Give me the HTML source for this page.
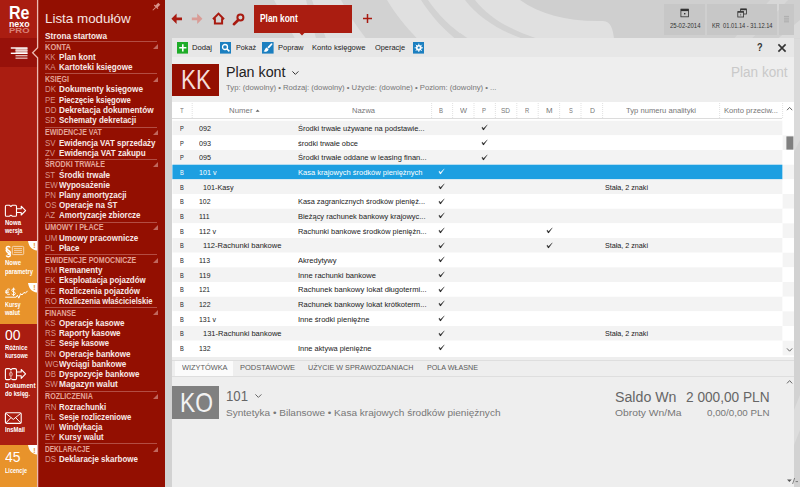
<!DOCTYPE html>
<html lang="pl"><head><meta charset="utf-8"><title>Plan kont</title>
<style>
html,body{margin:0;padding:0}
body{width:800px;height:487px;overflow:hidden;position:relative;background:#d2d2d2;font-family:"Liberation Sans",sans-serif}
.a{position:absolute;display:block}
.t{position:absolute;white-space:pre;transform-origin:0 50%}
.row{position:absolute;left:172.4px;width:621.6px;height:14.75px}
.sep{position:absolute;left:45.4px;width:112px;height:1px;background:#b34d43}
</style></head><body>
<!-- header background decoration -->
<svg class="a" style="left:166px;top:0" width="634" height="487" viewBox="166 0 634 487">
<rect x="166" y="0" width="634" height="487" fill="#d2d2d2"/>
<rect x="520" y="0" width="280" height="40" fill="#cfcfcf"/>
<path d="M274 0 L295 38.4 H614 C613 30 611 21 603 21 H598 C565 21 540 14 520 0Z" fill="#e0e0e0"/>
<g fill="#d2d2d2">
<path d="M306 0 H312 L326 38.4 H316Z"/>
<path d="M341 0 H387 C396 15 406 27 417 38.4 H366 C356 26 348 13 341 0Z"/>
<path d="M421 0 H428 C438 15 452 28 467 38.4 H455 C441 27 430 14 421 0Z"/>
<path d="M465 0 H475 C488 17 510 30 537 38.4 H522 C498 30 478 17 465 0Z"/>
<path d="M460 33 L468 38.4 H460Z"/>
</g>
<path d="M734 38.4 L770 0 H788 L752 38.4Z" fill="#d7d7d7"/><path d="M800 20 V38.4 H778Z" fill="#dadada"/>
<path d="M794 38.4 H800 V140 L794 152Z" fill="#dadada"/>
<path d="M794 410 L800 395 L800 430 L794 445Z" fill="#dcdcdc"/>
</svg>

<!-- left bar -->
<div class="a" style="left:0;top:0;width:37px;height:487px;background:#aa1d11"></div>
<div class="a" style="left:0;top:38px;width:37px;height:28.5px;background:#97110a"></div>
<div class="a" style="left:0;top:241px;width:37px;height:82.5px;background:#e8932b"></div>
<div class="a" style="left:0;top:445.4px;width:37px;height:42px;background:#e8932b"></div>
<!-- module panel -->
<div class="a" style="left:38px;top:0;width:127.3px;height:487px;background:#930f01"></div>
<!-- divider with notch -->
<svg class="a" style="left:28px;top:0" width="14" height="487" viewBox="28 0 14 487">
<path d="M37.6 0 V47.8 L32.6 52.8 L37.6 57.8 V487 H42 V0Z" fill="#930f01"/>
<path d="M37.6 0 V47.8 L32.6 52.8 L37.6 57.8 V487" fill="none" stroke="#ecbab2" stroke-width="1.3"/>
</svg>
<!-- orange corners -->
<svg class="a" style="left:28px;top:241px" width="9.2" height="9.5" viewBox="0 0 9.2 9.5"><path d="M0 0H9.2V9.5C4 9 1 6 0 0Z" fill="#fff"/></svg>
<svg class="a" style="left:28px;top:283px" width="9.2" height="9.5" viewBox="0 0 9.2 9.5"><path d="M0 0H9.2V9.5C4 9 1 6 0 0Z" fill="#fff"/></svg>
<svg class="a" style="left:28px;top:445.4px" width="9.2" height="9.5" viewBox="0 0 9.2 9.5"><path d="M0 0H9.2V9.5C4 9 1 6 0 0Z" fill="#fff"/></svg>

<!-- menu icon -->
<svg class="a" style="left:10px;top:46px" width="19" height="14" viewBox="10 46 19 14">
<rect x="15.5" y="48" width="12" height="6" fill="#d8aaa5"/>
<rect x="10.8" y="47.3" width="16.7" height="1.4" fill="#fff"/>
<rect x="15.5" y="50.1" width="12" height="0.9" fill="#efd6d3"/>
<rect x="10.8" y="52.6" width="16.7" height="1.4" fill="#fff"/>
<rect x="15.5" y="55.2" width="12" height="1.1" fill="#f3dcd9"/>
<rect x="15.5" y="57.6" width="12" height="1.1" fill="#f3dcd9"/>
</svg>
<!-- Nowa wersja icon -->
<svg class="a" style="left:4px;top:203px" width="24" height="16" viewBox="4 203 24 16" fill="none" stroke="#fff" stroke-width="1.1" stroke-linejoin="round">
<path d="M5.4 206.4 Q5.4 205.3 6.5 205.3 H9.6 L10.9 206.5 L12.2 205.3 H15.4 Q16.5 205.3 16.5 206.4 V215.2 Q16.5 216.3 15.4 216.3 H12.6 L10.9 215.3 L9.3 216.3 H6.5 Q5.4 216.3 5.4 215.2Z"/>
<path d="M16.5 208.7 H21.2 V206.2 L25.6 210.6 L21.2 215 V212.5 H16.5"/>
</svg>
<!-- paragraph icon -->
<svg class="a" style="left:4px;top:244px" width="22" height="15" viewBox="4 244 22 15" fill="none" stroke="#fff">
<path d="M10.2 247.6 C9.6 245.9 6.2 246 6.2 248.2 C6.2 250.2 10.4 250.3 10.4 252.6 C10.4 254.2 8.6 254.5 7.6 254.1 M6.3 255.6 C6.9 257.3 10.4 257.2 10.4 255 C10.4 253 6.2 252.9 6.2 250.6 C6.2 249.4 7.4 248.9 8.2 249" stroke-width="1.5"/>
<rect x="12.3" y="246.4" width="11.4" height="8.2" rx="1" stroke-width="0.9" stroke="#f7dcc0"/>
<path d="M14 248.6H22M14 250.5H22M14 252.4H22" stroke-width="0.8" stroke="#f7dcc0"/>
</svg>
<!-- kursy icon -->
<svg class="a" style="left:4px;top:286px" width="26" height="14" viewBox="4 286 26 14" fill="none" stroke="#fff" stroke-width="1">
<path d="M10 289.6 C8.4 288.2 6.2 289.4 6.2 291.8 C6.2 294.2 8.4 295.4 10 294 M5.2 291 H8.8 M5.2 292.7 H8.8"/>
<path d="M15.2 289.6 C14 288.4 11.8 288.8 11.8 290.3 C11.8 292.2 15.4 291.6 15.4 293.5 C15.4 295 12.8 295.3 11.6 294 M13.6 287.6 V296"/>
<path d="M5.2 297.2 H16.2 L17.4 295.2 L18.8 298.2 L20.6 293.6 L22 295 L24 292.4 L25.4 293.2 L27.6 290.8" stroke-width="1"/>
</svg>
<!-- dokument icon -->
<svg class="a" style="left:4px;top:366px" width="24" height="16" viewBox="4 366 24 16" fill="none" stroke="#fff" stroke-width="1.1" stroke-linejoin="round">
<path d="M5.4 370 Q5.4 368.6 6.8 368.6 H9.4 L10.9 369.8 L12.4 368.6 H15 Q16.5 368.6 16.5 370 V378.4 Q16.5 379.6 15.4 379.6 H12.6 L10.9 378.6 L9.3 379.6 H6.5 Q5.4 379.6 5.4 378.4Z"/>
<path d="M10.9 370.4 V378" stroke="#e9b9b3" stroke-width="0.9"/>
<ellipse cx="10.9" cy="374.2" rx="1.5" ry="2" stroke="#e9b9b3" stroke-width="0.8"/>
<path d="M16.5 372 H21.2 V369.5 L25.6 373.9 L21.2 378.3 V375.8 H16.5"/>
</svg>
<!-- envelope -->
<svg class="a" style="left:4px;top:411px" width="19" height="14" viewBox="4 411 19 14" fill="none" stroke="#fff" stroke-width="1.1" stroke-linejoin="round">
<rect x="5.4" y="412.8" width="15.8" height="10.6" rx="1.2"/>
<path d="M5.8 413.3 L13.3 419.4 L20.8 413.3 M5.8 423 L11 417.6 M20.8 423 L15.6 417.6" stroke-width="1"/>
</svg>
<!-- pin -->
<svg class="a" style="left:151px;top:2px" width="10" height="10" viewBox="0 0 10 10"><g transform="rotate(45 5 5)" fill="#d9958b"><rect x="3.6" y="0.4" width="2.8" height="4.2"/><rect x="2.4" y="4.2" width="5.2" height="1.2"/><rect x="4.6" y="5.4" width="0.9" height="4.2"/></g></svg>
<div class="sep" style="top:40.90px"></div>
<div class="sep" style="top:73.30px"></div>
<div class="sep" style="top:126.50px"></div>
<div class="sep" style="top:158.60px"></div>
<div class="sep" style="top:221.60px"></div>
<div class="sep" style="top:254.10px"></div>
<div class="sep" style="top:306.90px"></div>
<div class="sep" style="top:390.50px"></div>
<div class="sep" style="top:443.30px"></div>
<div class="sep" style="top:40.7px"></div>
<svg class="a" style="left:152.8px;top:44.30px" width="5" height="5" viewBox="0 0 5 5"><path d="M5 0V5H0Z" fill="#c0675d"/></svg>
<svg class="a" style="left:152.8px;top:76.70px" width="5" height="5" viewBox="0 0 5 5"><path d="M5 0V5H0Z" fill="#c0675d"/></svg>
<svg class="a" style="left:152.8px;top:129.90px" width="5" height="5" viewBox="0 0 5 5"><path d="M5 0V5H0Z" fill="#c0675d"/></svg>
<svg class="a" style="left:152.8px;top:162.00px" width="5" height="5" viewBox="0 0 5 5"><path d="M5 0V5H0Z" fill="#c0675d"/></svg>
<svg class="a" style="left:152.8px;top:225.00px" width="5" height="5" viewBox="0 0 5 5"><path d="M5 0V5H0Z" fill="#c0675d"/></svg>
<svg class="a" style="left:152.8px;top:257.50px" width="5" height="5" viewBox="0 0 5 5"><path d="M5 0V5H0Z" fill="#c0675d"/></svg>
<svg class="a" style="left:152.8px;top:310.30px" width="5" height="5" viewBox="0 0 5 5"><path d="M5 0V5H0Z" fill="#c0675d"/></svg>
<svg class="a" style="left:152.8px;top:393.90px" width="5" height="5" viewBox="0 0 5 5"><path d="M5 0V5H0Z" fill="#c0675d"/></svg>
<svg class="a" style="left:152.8px;top:446.70px" width="5" height="5" viewBox="0 0 5 5"><path d="M5 0V5H0Z" fill="#c0675d"/></svg>

<!-- nav icons -->
<svg class="a" style="left:170px;top:10px" width="80" height="18" viewBox="170 10 80 18">
<path d="M171.4 18.8 L176.6 13.6 V17.4 H182 V20.2 H176.6 V24Z" fill="#a81a10"/>
<path d="M202.4 18.8 L197.2 13.6 V17.4 H191.8 V20.2 H197.2 V24Z" fill="#d99c96"/>
<path d="M213 19.2 L218.5 13.6 L224 19.2 M214.9 18.2 V23.4 H222.1 V18.2" fill="none" stroke="#a81a10" stroke-width="2"/>
<circle cx="240.4" cy="17.6" r="3" fill="none" stroke="#a81a10" stroke-width="2"/>
<path d="M238.2 20 L233.9 24.2" stroke="#a81a10" stroke-width="2.6" stroke-linecap="round"/>
</svg>
<!-- tab -->
<div class="a" style="left:253.5px;top:5.2px;width:98.6px;height:27.4px;background:#aa1d11"></div>
<svg class="a" style="left:298px;top:32.4px" width="8" height="4" viewBox="0 0 8 4"><path d="M0.6 0H7.4L4 3.6Z" fill="#aa1d11"/></svg>
<svg class="a" style="left:362px;top:13px" width="11" height="11" viewBox="0 0 11 11"><path d="M5.5 1V10M1 5.5H10" stroke="#a81a10" stroke-width="1.5"/></svg>

<!-- top right boxes -->
<div class="a" style="left:664.4px;top:3.6px;width:40.8px;height:31px;background:#c7c7c7"></div>
<div class="a" style="left:707px;top:3.6px;width:69.5px;height:31px;background:#c7c7c7"></div>
<div class="a" style="left:778.6px;top:3.6px;width:15.4px;height:31px;background:#c7c7c7"></div>
<svg class="a" style="left:680px;top:8px" width="10" height="10" viewBox="0 0 10 10"><rect x="0.9" y="1.2" width="7.6" height="7.6" fill="none" stroke="#333" stroke-width="0.8"/><rect x="0.9" y="0.9" width="7.6" height="2.2" fill="#333"/><rect x="4" y="5" width="1.4" height="1.4" fill="#333"/></svg>
<svg class="a" style="left:737px;top:8px" width="11" height="10" viewBox="0 0 11 10"><rect x="3.6" y="1" width="5.8" height="5" fill="none" stroke="#333" stroke-width="0.8"/><rect x="3.6" y="0.7" width="5.8" height="1.5" fill="#333"/><rect x="0.8" y="3.6" width="5.8" height="5.4" fill="#c7c7c7" stroke="#333" stroke-width="0.8"/><rect x="0.8" y="3.4" width="5.8" height="1.3" fill="#333"/><rect x="3.3" y="5.8" width="0.8" height="1.8" fill="#666"/></svg>
<svg class="a" style="left:783px;top:14px" width="7" height="9" viewBox="0 0 7 9"><path d="M1 2.4H6M1 4.2H6M1 6H6M1 7.8H6" stroke="#a2a2a2" stroke-width="0.7"/></svg>

<!-- toolbar -->
<div class="a" style="left:172.4px;top:38.4px;width:621.6px;height:19px;background:#e7e7e7"></div>
<!-- content area -->
<div class="a" style="left:172.4px;top:57.4px;width:621.6px;height:429.6px;background:#eeeeee"></div>
<!-- toolbar icons -->
<svg class="a" style="left:176.6px;top:42px" width="11.6" height="11.6" viewBox="0 0 11.6 11.6"><rect width="11.6" height="11.6" fill="#1eac28"/><path d="M5.8 2.2V9.4M2.2 5.8H9.4" stroke="#fff" stroke-width="1.6"/></svg>
<svg class="a" style="left:219.8px;top:42px" width="11.6" height="11.6" viewBox="0 0 11.6 11.6"><rect width="11.6" height="11.6" fill="#1b7fc0"/><circle cx="5" cy="5" r="2.5" fill="none" stroke="#fff" stroke-width="1.3"/><path d="M6.9 6.9L9.4 9.4" stroke="#fff" stroke-width="1.5"/></svg>
<svg class="a" style="left:262.4px;top:42px" width="11.6" height="11.6" viewBox="0 0 11.6 11.6"><rect width="11.6" height="11.6" fill="#1b7fc0"/><path d="M10.2 1.2 L9 1.4 L5.4 5.2 L6.8 6.6 L10.4 2.6Z M4.8 5.6 L6.6 7.4 C6 9.4 3.8 10 1.6 9.6 C3 8.6 2.8 6.4 4.8 5.6Z" fill="#fff"/></svg>
<svg class="a" style="left:412.8px;top:42px" width="11.6" height="11.6" viewBox="0 0 11.6 11.6"><rect width="11.6" height="11.6" fill="#1b7fc0"/><circle cx="5.8" cy="5.8" r="2.2" fill="none" stroke="#fff" stroke-width="1.4"/><path d="M5.8 1.6V10M1.6 5.8H10M2.8 2.8L8.8 8.8M8.8 2.8L2.8 8.8" stroke="#fff" stroke-width="0.9"/><circle cx="5.8" cy="5.8" r="1" fill="#1b7fc0"/></svg>
<svg class="a" style="left:777px;top:43px" width="10" height="10" viewBox="0 0 10 10"><path d="M1.4 1.4L8.6 8.6M8.6 1.4L1.4 8.6" stroke="#333" stroke-width="1.6"/></svg>

<!-- KK box -->
<div class="a" style="left:172.4px;top:64px;width:46.6px;height:32.4px;background:#930f01"></div>
<svg class="a" style="left:291px;top:69px" width="9" height="8" viewBox="0 0 9 8"><path d="M1.4 2.4L4.4 5.4L7.4 2.4" fill="none" stroke="#333" stroke-width="1"/></svg>

<!-- table -->
<div class="a" style="left:172.4px;top:102.4px;width:621.6px;height:254.2px;background:#fff"></div>
<div class="a" style="left:172.4px;top:118.2px;width:610px;height:1px;background:#dcdcdc"></div>
<svg class="a" style="left:172px;top:119px" width="622" height="238" viewBox="172 119 622 238"><rect x="172.4" y="120.70" width="610.2" height="14.667" fill="#f3f3f3"/><rect x="172.4" y="135.37" width="610.2" height="14.667" fill="#ffffff"/><rect x="172.4" y="150.03" width="610.2" height="14.667" fill="#f3f3f3"/><rect x="172.4" y="164.70" width="610.2" height="14.667" fill="#1d9fe1"/><rect x="172.4" y="179.37" width="610.2" height="14.667" fill="#f3f3f3"/><rect x="172.4" y="194.03" width="610.2" height="14.667" fill="#ffffff"/><rect x="172.4" y="208.70" width="610.2" height="14.667" fill="#f3f3f3"/><rect x="172.4" y="223.37" width="610.2" height="14.667" fill="#ffffff"/><rect x="172.4" y="238.04" width="610.2" height="14.667" fill="#f3f3f3"/><rect x="172.4" y="252.70" width="610.2" height="14.667" fill="#ffffff"/><rect x="172.4" y="267.37" width="610.2" height="14.667" fill="#f3f3f3"/><rect x="172.4" y="282.04" width="610.2" height="14.667" fill="#ffffff"/><rect x="172.4" y="296.70" width="610.2" height="14.667" fill="#f3f3f3"/><rect x="172.4" y="311.37" width="610.2" height="14.667" fill="#ffffff"/><rect x="172.4" y="326.04" width="610.2" height="14.667" fill="#f3f3f3"/><rect x="172.4" y="340.70" width="610.2" height="14.667" fill="#ffffff"/><rect x="782.6" y="120.70" width="11.4" height="14.667" fill="#ffffff"/><rect x="782.6" y="135.37" width="11.4" height="14.667" fill="#f4f4f4"/><rect x="782.6" y="150.03" width="11.4" height="14.667" fill="#ffffff"/><rect x="782.6" y="164.70" width="11.4" height="14.667" fill="#f4f4f4"/><rect x="782.6" y="179.37" width="11.4" height="14.667" fill="#ffffff"/><rect x="782.6" y="194.03" width="11.4" height="14.667" fill="#f4f4f4"/><rect x="782.6" y="208.70" width="11.4" height="14.667" fill="#ffffff"/><rect x="782.6" y="223.37" width="11.4" height="14.667" fill="#f4f4f4"/><rect x="782.6" y="238.04" width="11.4" height="14.667" fill="#ffffff"/><rect x="782.6" y="252.70" width="11.4" height="14.667" fill="#f4f4f4"/><rect x="782.6" y="267.37" width="11.4" height="14.667" fill="#ffffff"/><rect x="782.6" y="282.04" width="11.4" height="14.667" fill="#f4f4f4"/><rect x="782.6" y="296.70" width="11.4" height="14.667" fill="#ffffff"/><rect x="782.6" y="311.37" width="11.4" height="14.667" fill="#f4f4f4"/><rect x="782.6" y="326.04" width="11.4" height="14.667" fill="#ffffff"/><rect x="782.6" y="340.70" width="11.4" height="14.667" fill="#f4f4f4"/></svg>

<!-- column separators -->
<svg class="a" style="left:172px;top:103px" width="622" height="15" viewBox="172 103 622 15"><path d="M192.2 103V118M431.6 103V118M452.6 103V118M474 103V118M495.4 103V118M516.8 103V118M538.2 103V118M559.6 103V118M581 103V118M602.6 103V118M719.6 103V118M782.6 103V118" stroke="#d9d9d9" stroke-width="0.8" stroke-dasharray="1 1"/>
<path d="M255.6 111.8H259.6L257.6 109.4Z" fill="#666"/></svg>
<!-- scrollbar -->
<svg class="a" style="left:784px;top:104px" width="10" height="252" viewBox="784 104 10 252"><path d="M787 110.2L789.6 107.4L792.2 110.2" fill="none" stroke="#555" stroke-width="0.9"/><rect x="786.4" y="136.4" width="7" height="13.2" fill="#7f7f7f"/><path d="M787 348.4L789.6 351.2L792.2 348.4" fill="none" stroke="#555" stroke-width="0.9"/></svg>
<svg class="a" style="left:480.80px;top:124.43px" width="7" height="7" viewBox="0 0 7 7"><path d="M0.8 3.6 L2.1 5.9 L2.7 5.9 L6.3 0.8 L2.5 4.6 L1.6 3.2Z" fill="#222" stroke="#222" stroke-width="0.3"/></svg>
<svg class="a" style="left:480.80px;top:139.10px" width="7" height="7" viewBox="0 0 7 7"><path d="M0.8 3.6 L2.1 5.9 L2.7 5.9 L6.3 0.8 L2.5 4.6 L1.6 3.2Z" fill="#222" stroke="#222" stroke-width="0.3"/></svg>
<svg class="a" style="left:480.80px;top:153.77px" width="7" height="7" viewBox="0 0 7 7"><path d="M0.8 3.6 L2.1 5.9 L2.7 5.9 L6.3 0.8 L2.5 4.6 L1.6 3.2Z" fill="#222" stroke="#222" stroke-width="0.3"/></svg>
<svg class="a" style="left:437.80px;top:168.43px" width="7" height="7" viewBox="0 0 7 7"><path d="M0.8 3.6 L2.1 5.9 L2.7 5.9 L6.3 0.8 L2.5 4.6 L1.6 3.2Z" fill="#fff" stroke="#fff" stroke-width="0.3"/></svg>
<svg class="a" style="left:437.80px;top:183.10px" width="7" height="7" viewBox="0 0 7 7"><path d="M0.8 3.6 L2.1 5.9 L2.7 5.9 L6.3 0.8 L2.5 4.6 L1.6 3.2Z" fill="#222" stroke="#222" stroke-width="0.3"/></svg>
<svg class="a" style="left:437.80px;top:197.77px" width="7" height="7" viewBox="0 0 7 7"><path d="M0.8 3.6 L2.1 5.9 L2.7 5.9 L6.3 0.8 L2.5 4.6 L1.6 3.2Z" fill="#222" stroke="#222" stroke-width="0.3"/></svg>
<svg class="a" style="left:437.80px;top:212.44px" width="7" height="7" viewBox="0 0 7 7"><path d="M0.8 3.6 L2.1 5.9 L2.7 5.9 L6.3 0.8 L2.5 4.6 L1.6 3.2Z" fill="#222" stroke="#222" stroke-width="0.3"/></svg>
<svg class="a" style="left:437.80px;top:227.10px" width="7" height="7" viewBox="0 0 7 7"><path d="M0.8 3.6 L2.1 5.9 L2.7 5.9 L6.3 0.8 L2.5 4.6 L1.6 3.2Z" fill="#222" stroke="#222" stroke-width="0.3"/></svg>
<svg class="a" style="left:545.80px;top:227.10px" width="7" height="7" viewBox="0 0 7 7"><path d="M0.8 3.6 L2.1 5.9 L2.7 5.9 L6.3 0.8 L2.5 4.6 L1.6 3.2Z" fill="#222" stroke="#222" stroke-width="0.3"/></svg>
<svg class="a" style="left:437.80px;top:241.77px" width="7" height="7" viewBox="0 0 7 7"><path d="M0.8 3.6 L2.1 5.9 L2.7 5.9 L6.3 0.8 L2.5 4.6 L1.6 3.2Z" fill="#222" stroke="#222" stroke-width="0.3"/></svg>
<svg class="a" style="left:545.80px;top:241.77px" width="7" height="7" viewBox="0 0 7 7"><path d="M0.8 3.6 L2.1 5.9 L2.7 5.9 L6.3 0.8 L2.5 4.6 L1.6 3.2Z" fill="#222" stroke="#222" stroke-width="0.3"/></svg>
<svg class="a" style="left:437.80px;top:256.44px" width="7" height="7" viewBox="0 0 7 7"><path d="M0.8 3.6 L2.1 5.9 L2.7 5.9 L6.3 0.8 L2.5 4.6 L1.6 3.2Z" fill="#222" stroke="#222" stroke-width="0.3"/></svg>
<svg class="a" style="left:437.80px;top:271.10px" width="7" height="7" viewBox="0 0 7 7"><path d="M0.8 3.6 L2.1 5.9 L2.7 5.9 L6.3 0.8 L2.5 4.6 L1.6 3.2Z" fill="#222" stroke="#222" stroke-width="0.3"/></svg>
<svg class="a" style="left:437.80px;top:285.77px" width="7" height="7" viewBox="0 0 7 7"><path d="M0.8 3.6 L2.1 5.9 L2.7 5.9 L6.3 0.8 L2.5 4.6 L1.6 3.2Z" fill="#222" stroke="#222" stroke-width="0.3"/></svg>
<svg class="a" style="left:437.80px;top:300.44px" width="7" height="7" viewBox="0 0 7 7"><path d="M0.8 3.6 L2.1 5.9 L2.7 5.9 L6.3 0.8 L2.5 4.6 L1.6 3.2Z" fill="#222" stroke="#222" stroke-width="0.3"/></svg>
<svg class="a" style="left:437.80px;top:315.10px" width="7" height="7" viewBox="0 0 7 7"><path d="M0.8 3.6 L2.1 5.9 L2.7 5.9 L6.3 0.8 L2.5 4.6 L1.6 3.2Z" fill="#222" stroke="#222" stroke-width="0.3"/></svg>
<svg class="a" style="left:437.80px;top:329.77px" width="7" height="7" viewBox="0 0 7 7"><path d="M0.8 3.6 L2.1 5.9 L2.7 5.9 L6.3 0.8 L2.5 4.6 L1.6 3.2Z" fill="#222" stroke="#222" stroke-width="0.3"/></svg>
<svg class="a" style="left:437.80px;top:344.44px" width="7" height="7" viewBox="0 0 7 7"><path d="M0.8 3.6 L2.1 5.9 L2.7 5.9 L6.3 0.8 L2.5 4.6 L1.6 3.2Z" fill="#222" stroke="#222" stroke-width="0.3"/></svg>

<!-- tab strip -->
<div class="a" style="left:172.4px;top:360px;width:621.6px;height:1px;background:#dedede"></div>
<div class="a" style="left:172.4px;top:375.8px;width:621.6px;height:1px;background:#dedede"></div>
<div class="a" style="left:174.8px;top:360.6px;width:58.6px;height:15.8px;background:#fbfbfb"></div>
<!-- KO box -->
<div class="a" style="left:172.4px;top:386px;width:46.6px;height:33px;background:#808080"></div>
<svg class="a" style="left:253.8px;top:391.8px" width="9" height="8" viewBox="0 0 9 8"><path d="M1.4 2.4L4.4 5.4L7.4 2.4" fill="none" stroke="#666" stroke-width="1"/></svg>
<svg class="a" style="left:784px;top:378px" width="16" height="109" viewBox="784 378 16 109"><path d="M787 383.4L789.6 380.6L792.2 383.4" fill="none" stroke="#555" stroke-width="0.9"/><path d="M787 479.4L789.4 482L791.8 479.4Z" fill="#555"/><path d="M794.6 478L792.6 484M795.6 481.6H798" stroke="#555" stroke-width="0.7"/></svg>

<span class="t" style="left:9.00px;top:2.00px;font-size:19px;line-height:22.8px;color:#fff;font-weight:700;transform:scaleX(0.8437);">Re</span>
<span class="t" style="left:9.00px;top:19.30px;font-size:8.5px;line-height:10.2px;color:#fff;font-weight:700;transform:scaleX(1.0331);">nexo</span>
<span class="t" style="left:9.00px;top:26.84px;font-size:6.6px;line-height:7.92px;color:#d98378;font-weight:700;transform:scaleX(1.4339);">PRO</span>
<span class="t" style="left:5.00px;top:218.88px;font-size:7.2px;line-height:8.64px;color:#fff;font-weight:700;transform:scaleX(0.8346);">Nowa</span>
<span class="t" style="left:5.00px;top:226.88px;font-size:7.2px;line-height:8.64px;color:#fff;font-weight:700;transform:scaleX(0.7816);">wersja</span>
<span class="t" style="left:5.00px;top:258.98px;font-size:7.2px;line-height:8.64px;color:#fff;font-weight:700;transform:scaleX(0.8346);">Nowe</span>
<span class="t" style="left:5.00px;top:268.08px;font-size:7.2px;line-height:8.64px;color:#fff;font-weight:700;transform:scaleX(0.8054);">parametry</span>
<span class="t" style="left:5.00px;top:301.28px;font-size:7.2px;line-height:8.64px;color:#fff;font-weight:700;transform:scaleX(0.7607);">Kursy</span>
<span class="t" style="left:5.00px;top:308.98px;font-size:7.2px;line-height:8.64px;color:#fff;font-weight:700;transform:scaleX(0.8163);">walut</span>
<span class="t" style="left:5.00px;top:325.90px;font-size:15.5px;line-height:18.6px;color:#fff;transform:scaleX(0.8986);">00</span>
<span class="t" style="left:5.00px;top:344.28px;font-size:7.2px;line-height:8.64px;color:#fff;font-weight:700;transform:scaleX(0.8163);">Różnice</span>
<span class="t" style="left:5.00px;top:352.28px;font-size:7.2px;line-height:8.64px;color:#fff;font-weight:700;transform:scaleX(0.7884);">kursowe</span>
<span class="t" style="left:5.00px;top:382.18px;font-size:7.2px;line-height:8.64px;color:#fff;font-weight:700;transform:scaleX(0.8676);">Dokument</span>
<span class="t" style="left:5.00px;top:389.88px;font-size:7.2px;line-height:8.64px;color:#fff;font-weight:700;transform:scaleX(0.8024);">do księg.</span>
<span class="t" style="left:5.00px;top:425.68px;font-size:7.2px;line-height:8.64px;color:#fff;font-weight:700;transform:scaleX(0.8205);">InsMail</span>
<span class="t" style="left:5.00px;top:449.24px;font-size:14.6px;line-height:17.52px;color:#fff;transform:scaleX(0.9548);">45</span>
<span class="t" style="left:5.00px;top:466.88px;font-size:7.2px;line-height:8.64px;color:#fff;font-weight:700;transform:scaleX(0.7648);">Licencje</span>
<span class="t" style="left:33.20px;top:242.40px;font-size:7px;line-height:8.4px;color:#e8932b;font-weight:700;">!</span>
<span class="t" style="left:33.20px;top:284.40px;font-size:7px;line-height:8.4px;color:#e8932b;font-weight:700;">!</span>
<span class="t" style="left:33.20px;top:446.80px;font-size:7px;line-height:8.4px;color:#e8932b;font-weight:700;">!</span>
<span class="t" style="left:45.40px;top:11.20px;font-size:13.5px;line-height:16.2px;color:#f6e4e1;transform:scaleX(0.9919);">Lista modułów</span>
<span class="t" style="left:45.40px;top:30.72px;font-size:9.3px;line-height:11.16px;color:#f8eae8;font-weight:700;transform:scaleX(0.8824);">Strona startowa</span>
<span class="t" style="left:45.40px;top:41.68px;font-size:9.2px;line-height:11.04px;color:#e3a599;font-weight:700;transform:scaleX(0.8129);">KONTA</span>
<span class="t" style="left:45.40px;top:51.99px;font-size:9.3px;line-height:11.16px;color:#d9958b;transform:scaleX(0.8500);">KK</span>
<span class="t" style="left:59.40px;top:51.99px;font-size:9.3px;line-height:11.16px;color:#f8eae8;font-weight:700;transform:scaleX(0.8747);">Plan kont</span>
<span class="t" style="left:45.40px;top:62.16px;font-size:9.3px;line-height:11.16px;color:#d9958b;transform:scaleX(0.8500);">KA</span>
<span class="t" style="left:59.40px;top:62.16px;font-size:9.3px;line-height:11.16px;color:#f8eae8;font-weight:700;transform:scaleX(0.8662);">Kartoteki księgowe</span>
<span class="t" style="left:45.40px;top:74.08px;font-size:9.2px;line-height:11.04px;color:#e3a599;font-weight:700;transform:scaleX(0.7703);">KSIĘGI</span>
<span class="t" style="left:45.40px;top:84.39px;font-size:9.3px;line-height:11.16px;color:#d9958b;transform:scaleX(0.8500);">DK</span>
<span class="t" style="left:59.40px;top:84.39px;font-size:9.3px;line-height:11.16px;color:#f8eae8;font-weight:700;transform:scaleX(0.8836);">Dokumenty księgowe</span>
<span class="t" style="left:45.40px;top:94.56px;font-size:9.3px;line-height:11.16px;color:#d9958b;transform:scaleX(0.8500);">PE</span>
<span class="t" style="left:59.40px;top:94.56px;font-size:9.3px;line-height:11.16px;color:#f8eae8;font-weight:700;transform:scaleX(0.8330);">Pieczęcie księgowe</span>
<span class="t" style="left:45.40px;top:104.73px;font-size:9.3px;line-height:11.16px;color:#d9958b;transform:scaleX(0.8500);">DD</span>
<span class="t" style="left:59.40px;top:104.73px;font-size:9.3px;line-height:11.16px;color:#f8eae8;font-weight:700;transform:scaleX(0.8854);">Dekretacja dokumentów</span>
<span class="t" style="left:45.40px;top:114.90px;font-size:9.3px;line-height:11.16px;color:#d9958b;transform:scaleX(0.8500);">SD</span>
<span class="t" style="left:59.40px;top:114.90px;font-size:9.3px;line-height:11.16px;color:#f8eae8;font-weight:700;transform:scaleX(0.8585);">Schematy dekretacji</span>
<span class="t" style="left:45.40px;top:127.28px;font-size:9.2px;line-height:11.04px;color:#e3a599;font-weight:700;transform:scaleX(0.7670);">EWIDENCJE VAT</span>
<span class="t" style="left:45.40px;top:137.59px;font-size:9.3px;line-height:11.16px;color:#d9958b;transform:scaleX(0.8500);">SV</span>
<span class="t" style="left:59.40px;top:137.59px;font-size:9.3px;line-height:11.16px;color:#f8eae8;font-weight:700;transform:scaleX(0.8554);">Ewidencja VAT sprzedaży</span>
<span class="t" style="left:45.40px;top:147.76px;font-size:9.3px;line-height:11.16px;color:#d9958b;transform:scaleX(0.8500);">ZV</span>
<span class="t" style="left:59.40px;top:147.76px;font-size:9.3px;line-height:11.16px;color:#f8eae8;font-weight:700;transform:scaleX(0.8681);">Ewidencja VAT zakupu</span>
<span class="t" style="left:45.40px;top:159.38px;font-size:9.2px;line-height:11.04px;color:#e3a599;font-weight:700;transform:scaleX(0.7789);">ŚRODKI TRWAŁE</span>
<span class="t" style="left:45.40px;top:169.69px;font-size:9.3px;line-height:11.16px;color:#d9958b;transform:scaleX(0.8500);">ST</span>
<span class="t" style="left:59.40px;top:169.69px;font-size:9.3px;line-height:11.16px;color:#f8eae8;font-weight:700;transform:scaleX(0.8717);">Środki trwałe</span>
<span class="t" style="left:45.40px;top:179.86px;font-size:9.3px;line-height:11.16px;color:#d9958b;transform:scaleX(0.8500);">EW</span>
<span class="t" style="left:59.40px;top:179.86px;font-size:9.3px;line-height:11.16px;color:#f8eae8;font-weight:700;transform:scaleX(0.8666);">Wyposażenie</span>
<span class="t" style="left:45.40px;top:190.03px;font-size:9.3px;line-height:11.16px;color:#d9958b;transform:scaleX(0.8500);">PN</span>
<span class="t" style="left:59.40px;top:190.03px;font-size:9.3px;line-height:11.16px;color:#f8eae8;font-weight:700;transform:scaleX(0.8606);">Plany amortyzacji</span>
<span class="t" style="left:45.40px;top:200.20px;font-size:9.3px;line-height:11.16px;color:#d9958b;transform:scaleX(0.8500);">OS</span>
<span class="t" style="left:59.40px;top:200.20px;font-size:9.3px;line-height:11.16px;color:#f8eae8;font-weight:700;transform:scaleX(0.8626);">Operacje na ŚT</span>
<span class="t" style="left:45.40px;top:210.37px;font-size:9.3px;line-height:11.16px;color:#d9958b;transform:scaleX(0.8500);">AZ</span>
<span class="t" style="left:59.40px;top:210.37px;font-size:9.3px;line-height:11.16px;color:#f8eae8;font-weight:700;transform:scaleX(0.8572);">Amortyzacje zbiorcze</span>
<span class="t" style="left:45.40px;top:222.38px;font-size:9.2px;line-height:11.04px;color:#e3a599;font-weight:700;transform:scaleX(0.7826);">UMOWY I PŁACE</span>
<span class="t" style="left:45.40px;top:232.69px;font-size:9.3px;line-height:11.16px;color:#d9958b;transform:scaleX(0.8500);">UM</span>
<span class="t" style="left:59.40px;top:232.69px;font-size:9.3px;line-height:11.16px;color:#f8eae8;font-weight:700;transform:scaleX(0.8660);">Umowy pracownicze</span>
<span class="t" style="left:45.40px;top:242.86px;font-size:9.3px;line-height:11.16px;color:#d9958b;transform:scaleX(0.8500);">PL</span>
<span class="t" style="left:59.40px;top:242.86px;font-size:9.3px;line-height:11.16px;color:#f8eae8;font-weight:700;transform:scaleX(0.8355);">Płace</span>
<span class="t" style="left:45.40px;top:254.88px;font-size:9.2px;line-height:11.04px;color:#e3a599;font-weight:700;transform:scaleX(0.7635);">EWIDENCJE POMOCNICZE</span>
<span class="t" style="left:45.40px;top:265.19px;font-size:9.3px;line-height:11.16px;color:#d9958b;transform:scaleX(0.8500);">RM</span>
<span class="t" style="left:59.40px;top:265.19px;font-size:9.3px;line-height:11.16px;color:#f8eae8;font-weight:700;transform:scaleX(0.8658);">Remanenty</span>
<span class="t" style="left:45.40px;top:275.36px;font-size:9.3px;line-height:11.16px;color:#d9958b;transform:scaleX(0.8500);">EK</span>
<span class="t" style="left:59.40px;top:275.36px;font-size:9.3px;line-height:11.16px;color:#f8eae8;font-weight:700;transform:scaleX(0.8518);">Eksploatacja pojazdów</span>
<span class="t" style="left:45.40px;top:285.53px;font-size:9.3px;line-height:11.16px;color:#d9958b;transform:scaleX(0.8500);">KE</span>
<span class="t" style="left:59.40px;top:285.53px;font-size:9.3px;line-height:11.16px;color:#f8eae8;font-weight:700;transform:scaleX(0.8476);">Rozliczenia pojazdów</span>
<span class="t" style="left:45.40px;top:295.70px;font-size:9.3px;line-height:11.16px;color:#d9958b;transform:scaleX(0.8500);">RO</span>
<span class="t" style="left:59.40px;top:295.70px;font-size:9.3px;line-height:11.16px;color:#f8eae8;font-weight:700;transform:scaleX(0.8149);">Rozliczenia właścicielskie</span>
<span class="t" style="left:45.40px;top:307.68px;font-size:9.2px;line-height:11.04px;color:#e3a599;font-weight:700;transform:scaleX(0.7687);">FINANSE</span>
<span class="t" style="left:45.40px;top:317.99px;font-size:9.3px;line-height:11.16px;color:#d9958b;transform:scaleX(0.8500);">KS</span>
<span class="t" style="left:59.40px;top:317.99px;font-size:9.3px;line-height:11.16px;color:#f8eae8;font-weight:700;transform:scaleX(0.8609);">Operacje kasowe</span>
<span class="t" style="left:45.40px;top:328.16px;font-size:9.3px;line-height:11.16px;color:#d9958b;transform:scaleX(0.8500);">RS</span>
<span class="t" style="left:59.40px;top:328.16px;font-size:9.3px;line-height:11.16px;color:#f8eae8;font-weight:700;transform:scaleX(0.8638);">Raporty kasowe</span>
<span class="t" style="left:45.40px;top:338.33px;font-size:9.3px;line-height:11.16px;color:#d9958b;transform:scaleX(0.8500);">SE</span>
<span class="t" style="left:59.40px;top:338.33px;font-size:9.3px;line-height:11.16px;color:#f8eae8;font-weight:700;transform:scaleX(0.8283);">Sesje kasowe</span>
<span class="t" style="left:45.40px;top:348.50px;font-size:9.3px;line-height:11.16px;color:#d9958b;transform:scaleX(0.8500);">BN</span>
<span class="t" style="left:59.40px;top:348.50px;font-size:9.3px;line-height:11.16px;color:#f8eae8;font-weight:700;transform:scaleX(0.8715);">Operacje bankowe</span>
<span class="t" style="left:45.40px;top:358.67px;font-size:9.3px;line-height:11.16px;color:#d9958b;transform:scaleX(0.8500);">WG</span>
<span class="t" style="left:59.40px;top:358.67px;font-size:9.3px;line-height:11.16px;color:#f8eae8;font-weight:700;transform:scaleX(0.8690);">Wyciągi bankowe</span>
<span class="t" style="left:45.40px;top:368.84px;font-size:9.3px;line-height:11.16px;color:#d9958b;transform:scaleX(0.8500);">DB</span>
<span class="t" style="left:59.40px;top:368.84px;font-size:9.3px;line-height:11.16px;color:#f8eae8;font-weight:700;transform:scaleX(0.8596);">Dyspozycje bankowe</span>
<span class="t" style="left:45.40px;top:379.01px;font-size:9.3px;line-height:11.16px;color:#d9958b;transform:scaleX(0.8500);">SW</span>
<span class="t" style="left:59.40px;top:379.01px;font-size:9.3px;line-height:11.16px;color:#f8eae8;font-weight:700;transform:scaleX(0.8977);">Magazyn walut</span>
<span class="t" style="left:45.40px;top:391.28px;font-size:9.2px;line-height:11.04px;color:#e3a599;font-weight:700;transform:scaleX(0.7739);">ROZLICZENIA</span>
<span class="t" style="left:45.40px;top:401.59px;font-size:9.3px;line-height:11.16px;color:#d9958b;transform:scaleX(0.8500);">RN</span>
<span class="t" style="left:59.40px;top:401.59px;font-size:9.3px;line-height:11.16px;color:#f8eae8;font-weight:700;transform:scaleX(0.8441);">Rozrachunki</span>
<span class="t" style="left:45.40px;top:411.76px;font-size:9.3px;line-height:11.16px;color:#d9958b;transform:scaleX(0.8500);">RL</span>
<span class="t" style="left:59.40px;top:411.76px;font-size:9.3px;line-height:11.16px;color:#f8eae8;font-weight:700;transform:scaleX(0.8268);">Sesje rozliczeniowe</span>
<span class="t" style="left:45.40px;top:421.93px;font-size:9.3px;line-height:11.16px;color:#d9958b;transform:scaleX(0.8500);">WI</span>
<span class="t" style="left:59.40px;top:421.93px;font-size:9.3px;line-height:11.16px;color:#f8eae8;font-weight:700;transform:scaleX(0.8497);">Windykacja</span>
<span class="t" style="left:45.40px;top:432.10px;font-size:9.3px;line-height:11.16px;color:#d9958b;transform:scaleX(0.8500);">EY</span>
<span class="t" style="left:59.40px;top:432.10px;font-size:9.3px;line-height:11.16px;color:#f8eae8;font-weight:700;transform:scaleX(0.8462);">Kursy walut</span>
<span class="t" style="left:45.40px;top:444.08px;font-size:9.2px;line-height:11.04px;color:#e3a599;font-weight:700;transform:scaleX(0.7134);">DEKLARACJE</span>
<span class="t" style="left:45.40px;top:454.39px;font-size:9.3px;line-height:11.16px;color:#d9958b;transform:scaleX(0.8500);">DS</span>
<span class="t" style="left:59.40px;top:454.39px;font-size:9.3px;line-height:11.16px;color:#f8eae8;font-weight:700;transform:scaleX(0.8576);">Deklaracje skarbowe</span>
<span class="t" style="left:259.50px;top:12.44px;font-size:10.6px;line-height:12.72px;color:#fff;font-weight:700;transform:scaleX(0.7927);">Plan kont</span>
<span class="t" style="left:192.30px;top:43.00px;font-size:8px;line-height:9.6px;color:#222;transform:scaleX(0.9567);">Dodaj</span>
<span class="t" style="left:235.50px;top:43.00px;font-size:8px;line-height:9.6px;color:#222;transform:scaleX(0.8995);">Pokaż</span>
<span class="t" style="left:278.00px;top:43.00px;font-size:8px;line-height:9.6px;color:#222;transform:scaleX(0.9401);">Popraw</span>
<span class="t" style="left:312.00px;top:43.00px;font-size:8px;line-height:9.6px;color:#222;transform:scaleX(0.9472);">Konto księgowe</span>
<span class="t" style="left:374.50px;top:43.00px;font-size:8px;line-height:9.6px;color:#222;transform:scaleX(0.9240);">Operacje</span>
<span class="t" style="left:670.00px;top:22.04px;font-size:6.6px;line-height:7.92px;color:#333;transform:scaleX(0.9041);">25-02-2014</span>
<span class="t" style="left:712.00px;top:22.04px;font-size:6.6px;line-height:7.92px;color:#333;transform:scaleX(0.8639);">KR  01.01.14 - 31.12.14</span>
<span class="t" style="left:756.80px;top:41.10px;font-size:11.5px;line-height:13.8px;color:#333;font-weight:700;transform:scaleX(0.7964);">?</span>
<span class="t" style="left:181.00px;top:62.80px;font-size:28px;line-height:33.6px;color:#f3dcd8;transform:scaleX(0.8030);">KK</span>
<span class="t" style="left:226.30px;top:63.30px;font-size:15.5px;line-height:18.6px;color:#222;transform:scaleX(0.9205);">Plan kont</span>
<span class="t" style="left:226.30px;top:82.52px;font-size:7.8px;line-height:9.36px;color:#777;transform:scaleX(0.9874);">Typ: (dowolny) • Rodzaj: (dowolny) • Użycie: (dowolne) • Poziom: (dowolny) • ...</span>
<span class="t" style="left:731.00px;top:63.30px;font-size:15.5px;line-height:18.6px;color:#c9c9c9;transform:scaleX(0.8741);">Plan kont</span>
<span class="t" style="left:180.40px;top:105.80px;font-size:8px;line-height:9.6px;color:#777;transform:scaleX(0.7770);">T</span>
<span class="t" style="left:229.00px;top:105.80px;font-size:8px;line-height:9.6px;color:#777;transform:scaleX(0.9785);">Numer</span>
<span class="t" style="left:352.00px;top:105.80px;font-size:8px;line-height:9.6px;color:#777;transform:scaleX(0.9406);">Nazwa</span>
<span class="t" style="left:439.00px;top:105.80px;font-size:8px;line-height:9.6px;color:#777;transform:scaleX(0.7485);">B</span>
<span class="t" style="left:459.50px;top:105.80px;font-size:8px;line-height:9.6px;color:#777;transform:scaleX(0.9256);">W</span>
<span class="t" style="left:482.00px;top:105.80px;font-size:8px;line-height:9.6px;color:#777;transform:scaleX(0.7485);">P</span>
<span class="t" style="left:500.50px;top:105.80px;font-size:8px;line-height:9.6px;color:#777;transform:scaleX(0.8090);">SD</span>
<span class="t" style="left:524.90px;top:105.80px;font-size:8px;line-height:9.6px;color:#777;transform:scaleX(0.7265);">R</span>
<span class="t" style="left:545.70px;top:105.80px;font-size:8px;line-height:9.6px;color:#777;transform:scaleX(0.9892);">M</span>
<span class="t" style="left:568.60px;top:105.80px;font-size:8px;line-height:9.6px;color:#777;transform:scaleX(0.7111);">S</span>
<span class="t" style="left:589.50px;top:105.80px;font-size:8px;line-height:9.6px;color:#777;transform:scaleX(0.8649);">D</span>
<span class="t" style="left:626.00px;top:105.80px;font-size:8px;line-height:9.6px;color:#777;transform:scaleX(0.9540);">Typ numeru analityki</span>
<span class="t" style="left:724.00px;top:105.80px;font-size:8px;line-height:9.6px;color:#777;transform:scaleX(0.9560);">Konto przeciw...</span>
<span class="t" style="left:180.40px;top:123.83px;font-size:8px;line-height:9.6px;color:#222;transform:scaleX(0.7111);">P</span>
<span class="t" style="left:198.50px;top:123.83px;font-size:8px;line-height:9.6px;color:#222;transform:scaleX(0.8982);">092</span>
<span class="t" style="left:298.00px;top:123.83px;font-size:8px;line-height:9.6px;color:#222;transform:scaleX(0.9296);">Środki trwałe używane na podstawie...</span>
<span class="t" style="left:180.40px;top:138.50px;font-size:8px;line-height:9.6px;color:#222;transform:scaleX(0.7111);">P</span>
<span class="t" style="left:198.50px;top:138.50px;font-size:8px;line-height:9.6px;color:#222;transform:scaleX(0.8982);">093</span>
<span class="t" style="left:298.00px;top:138.50px;font-size:8px;line-height:9.6px;color:#222;transform:scaleX(0.9305);">środki trwałe obce</span>
<span class="t" style="left:180.40px;top:153.17px;font-size:8px;line-height:9.6px;color:#222;transform:scaleX(0.7111);">P</span>
<span class="t" style="left:198.50px;top:153.17px;font-size:8px;line-height:9.6px;color:#222;transform:scaleX(0.8982);">095</span>
<span class="t" style="left:298.00px;top:153.17px;font-size:8px;line-height:9.6px;color:#222;transform:scaleX(0.9382);">Środki trwałe oddane w leasing finan...</span>
<span class="t" style="left:180.40px;top:167.83px;font-size:8px;line-height:9.6px;color:#fff;transform:scaleX(0.7111);">B</span>
<span class="t" style="left:198.50px;top:167.83px;font-size:8px;line-height:9.6px;color:#fff;transform:scaleX(0.8939);">101 v</span>
<span class="t" style="left:298.00px;top:167.83px;font-size:8px;line-height:9.6px;color:#fff;transform:scaleX(0.9395);">Kasa krajowych środków pieniężnych</span>
<span class="t" style="left:180.40px;top:182.50px;font-size:8px;line-height:9.6px;color:#222;transform:scaleX(0.7111);">B</span>
<span class="t" style="left:202.90px;top:182.50px;font-size:8px;line-height:9.6px;color:#222;transform:scaleX(0.9025);">101-Kasy</span>
<span class="t" style="left:605.00px;top:182.50px;font-size:8px;line-height:9.6px;color:#222;transform:scaleX(0.8953);">Stała, 2 znaki</span>
<span class="t" style="left:180.40px;top:197.17px;font-size:8px;line-height:9.6px;color:#222;transform:scaleX(0.7111);">B</span>
<span class="t" style="left:198.50px;top:197.17px;font-size:8px;line-height:9.6px;color:#222;transform:scaleX(0.8608);">102</span>
<span class="t" style="left:298.00px;top:197.17px;font-size:8px;line-height:9.6px;color:#222;transform:scaleX(0.9212);">Kasa zagranicznych środków pienięż...</span>
<span class="t" style="left:180.40px;top:211.84px;font-size:8px;line-height:9.6px;color:#222;transform:scaleX(0.7111);">B</span>
<span class="t" style="left:198.50px;top:211.84px;font-size:8px;line-height:9.6px;color:#222;transform:scaleX(0.8626);">111</span>
<span class="t" style="left:298.00px;top:211.84px;font-size:8px;line-height:9.6px;color:#222;transform:scaleX(0.9310);">Bieżący rachunek bankowy krajowyc...</span>
<span class="t" style="left:180.40px;top:226.50px;font-size:8px;line-height:9.6px;color:#222;transform:scaleX(0.7111);">B</span>
<span class="t" style="left:198.50px;top:226.50px;font-size:8px;line-height:9.6px;color:#222;transform:scaleX(0.8955);">112 v</span>
<span class="t" style="left:298.00px;top:226.50px;font-size:8px;line-height:9.6px;color:#222;transform:scaleX(0.9291);">Rachunki bankowe środków pieniężn...</span>
<span class="t" style="left:180.40px;top:241.17px;font-size:8px;line-height:9.6px;color:#222;transform:scaleX(0.7111);">B</span>
<span class="t" style="left:202.90px;top:241.17px;font-size:8px;line-height:9.6px;color:#222;transform:scaleX(0.9456);">112-Rachunki bankowe</span>
<span class="t" style="left:605.00px;top:241.17px;font-size:8px;line-height:9.6px;color:#222;transform:scaleX(0.8953);">Stała, 2 znaki</span>
<span class="t" style="left:180.40px;top:255.84px;font-size:8px;line-height:9.6px;color:#222;transform:scaleX(0.7111);">B</span>
<span class="t" style="left:198.50px;top:255.84px;font-size:8px;line-height:9.6px;color:#222;transform:scaleX(0.8617);">113</span>
<span class="t" style="left:298.00px;top:255.84px;font-size:8px;line-height:9.6px;color:#222;transform:scaleX(0.9412);">Akredytywy</span>
<span class="t" style="left:180.40px;top:270.50px;font-size:8px;line-height:9.6px;color:#222;transform:scaleX(0.7111);">B</span>
<span class="t" style="left:198.50px;top:270.50px;font-size:8px;line-height:9.6px;color:#222;transform:scaleX(0.9009);">119</span>
<span class="t" style="left:298.00px;top:270.50px;font-size:8px;line-height:9.6px;color:#222;transform:scaleX(0.9480);">Inne rachunki bankowe</span>
<span class="t" style="left:180.40px;top:285.17px;font-size:8px;line-height:9.6px;color:#222;transform:scaleX(0.7111);">B</span>
<span class="t" style="left:198.50px;top:285.17px;font-size:8px;line-height:9.6px;color:#222;transform:scaleX(0.8234);">121</span>
<span class="t" style="left:298.00px;top:285.17px;font-size:8px;line-height:9.6px;color:#222;transform:scaleX(0.9505);">Rachunek bankowy lokat długotermi...</span>
<span class="t" style="left:180.40px;top:299.84px;font-size:8px;line-height:9.6px;color:#222;transform:scaleX(0.7111);">B</span>
<span class="t" style="left:198.50px;top:299.84px;font-size:8px;line-height:9.6px;color:#222;transform:scaleX(0.8608);">122</span>
<span class="t" style="left:298.00px;top:299.84px;font-size:8px;line-height:9.6px;color:#222;transform:scaleX(0.9475);">Rachunek bankowy lokat krótkoterm...</span>
<span class="t" style="left:180.40px;top:314.50px;font-size:8px;line-height:9.6px;color:#222;transform:scaleX(0.7111);">B</span>
<span class="t" style="left:198.50px;top:314.50px;font-size:8px;line-height:9.6px;color:#222;transform:scaleX(0.8683);">131 v</span>
<span class="t" style="left:298.00px;top:314.50px;font-size:8px;line-height:9.6px;color:#222;transform:scaleX(0.9456);">Inne środki pieniężne</span>
<span class="t" style="left:180.40px;top:329.17px;font-size:8px;line-height:9.6px;color:#222;transform:scaleX(0.7111);">B</span>
<span class="t" style="left:202.90px;top:329.17px;font-size:8px;line-height:9.6px;color:#222;transform:scaleX(0.9389);">131-Rachunki bankowe</span>
<span class="t" style="left:605.00px;top:329.17px;font-size:8px;line-height:9.6px;color:#222;transform:scaleX(0.8953);">Stała, 2 znaki</span>
<span class="t" style="left:180.40px;top:343.84px;font-size:8px;line-height:9.6px;color:#222;transform:scaleX(0.7111);">B</span>
<span class="t" style="left:198.50px;top:343.84px;font-size:8px;line-height:9.6px;color:#222;transform:scaleX(0.8608);">132</span>
<span class="t" style="left:298.00px;top:343.84px;font-size:8px;line-height:9.6px;color:#222;transform:scaleX(0.9284);">Inne aktywa pieniężne</span>
<span class="t" style="left:181.50px;top:363.00px;font-size:8px;line-height:9.6px;color:#5a5a5a;transform:scaleX(0.9224);">WIZYTÓWKA</span>
<span class="t" style="left:240.00px;top:363.00px;font-size:8px;line-height:9.6px;color:#5a5a5a;transform:scaleX(0.9374);">PODSTAWOWE</span>
<span class="t" style="left:307.50px;top:363.00px;font-size:8px;line-height:9.6px;color:#5a5a5a;transform:scaleX(0.8980);">UŻYCIE W SPRAWOZDANIACH</span>
<span class="t" style="left:426.50px;top:363.00px;font-size:8px;line-height:9.6px;color:#5a5a5a;transform:scaleX(0.8960);">POLA WŁASNE</span>
<span class="t" style="left:179.50px;top:385.90px;font-size:28px;line-height:33.6px;color:#f2f2f2;transform:scaleX(0.8154);">KO</span>
<span class="t" style="left:226.30px;top:386.50px;font-size:15.5px;line-height:18.6px;color:#666;transform:scaleX(0.8502);">101</span>
<span class="t" style="left:226.30px;top:406.54px;font-size:9.6px;line-height:11.52px;color:#777;transform:scaleX(1.0471);">Syntetyka • Bilansowe • Kasa krajowych środków pieniężnych</span>
<span class="t" style="left:615.20px;top:388.60px;font-size:14px;line-height:16.8px;color:#666;transform:scaleX(1.0131);">Saldo Wn</span>
<span class="t" style="left:685.50px;top:388.60px;font-size:14px;line-height:16.8px;color:#666;transform:scaleX(0.9752);">2 000,00 PLN</span>
<span class="t" style="left:615.20px;top:406.54px;font-size:9.6px;line-height:11.52px;color:#777;transform:scaleX(1.0753);">Obroty Wn/Ma</span>
<span class="t" style="left:706.50px;top:406.54px;font-size:9.6px;line-height:11.52px;color:#777;transform:scaleX(1.0188);">0,00/0,00 PLN</span>
</body></html>
